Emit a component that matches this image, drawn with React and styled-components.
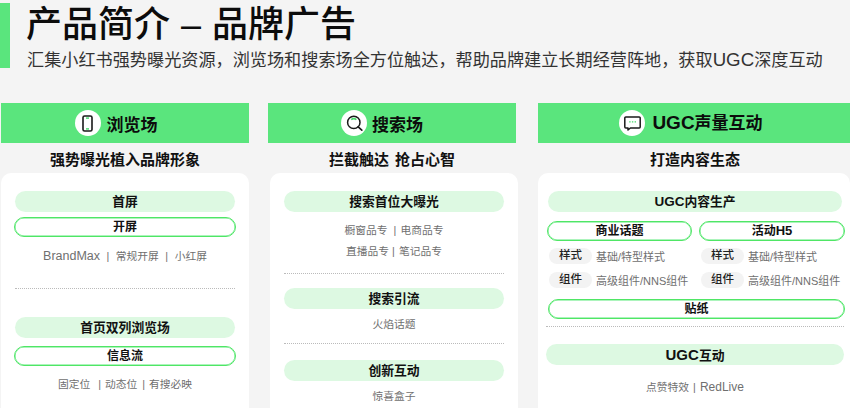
import React from "react";
import styled, { createGlobalStyle } from "styled-components";

const GlobalStyle = createGlobalStyle`
  html, body {
    margin: 0;
    padding: 0;
    width: 850px;
    height: 408px;
    overflow: hidden;
    background: #f4f4f4;
    font-family: "Liberation Sans", "Noto Sans CJK SC", sans-serif;
  }
`;

const Page = styled.div`
  width: 850px;
  height: 408px;
  overflow: hidden;
  padding-top: 3px;
  box-sizing: border-box;
`;

const Hero = styled.header`
  display: flex;
  gap: 16px;
  height: 65px;
`;

const Accent = styled.div`
  width: 10px;
  background: #5ae57d;
`;

const HeroText = styled.div`
  display: flex;
  flex-direction: column;
  margin-top: -2px;
`;

const Title = styled.h1`
  margin: 0;
  height: 48px;
  font-size: 36px;
  line-height: 47px;
  font-weight: 500;
  word-spacing: 1px;
  color: #0c0c0c;
  white-space: nowrap;
`;

const Subtitle = styled.p`
  margin: 0 0 0 1px;
  font-size: 17.15px;
  line-height: 24px;
  color: #333;
  white-space: nowrap;
`;

// latin runs are set larger than the cjk around them in the reference
const Latin = styled.span`
  font-size: ${(p) => p.$size}px;
`;

const Sep = styled.span`
  margin: 0 ${(p) => p.$right ?? 6.5}px 0 ${(p) => p.$left ?? 6.5}px;
`;

const Columns = styled.div`
  display: grid;
  grid-template-columns: 267px 270px 312px;
  margin: 35px 0 0 1px;
`;

const Column = styled.section`
  display: flex;
  flex-direction: column;
  min-width: 0;
`;

const ColumnHead = styled.div`
  display: flex;
  align-items: center;
  justify-content: center;
  gap: ${(p) => p.$gap || 6}px;
  height: 40px;
  box-sizing: border-box;
  padding-right: ${(p) => p.$pad || 0}px;
  padding-bottom: ${(p) => p.$lift || 0}px;
  background: #5ae57d;
  width: ${(p) => p.$width}px;
  font-size: 17px;
  font-weight: 700;
  color: #0c0c0c;
`;

const IconBadge = styled.span`
  display: flex;
  align-items: center;
  justify-content: center;
  width: 26px;
  height: 26px;
  border-radius: 50%;
  background: #fff;
  margin-top: ${(p) => p.$drop || 0}px;
`;

const Tagline = styled.div`
  height: 30px;
  line-height: 33px;
  text-align: center;
  font-size: 15px;
  font-weight: 700;
  word-spacing: ${(p) => p.$spread || 0}px;
  color: #111;
  width: ${(p) => p.$width}px;
`;

const Card = styled.div`
  display: flex;
  flex-direction: column;
  height: 250px;
  background: #fff;
  border-radius: 10px 10px 0 0;
  box-sizing: border-box;
  padding: 18px ${(p) => p.$side || 14}px 0;
  margin-left: ${(p) => p.$shift || 0}px;
  width: ${(p) => p.$width}px;
`;

const Pill = styled.div`
  height: 21px;
  line-height: 21px;
  border-radius: 11px;
  background: #ddf9e2;
  text-align: center;
  font-size: 12.8px;
  font-weight: 700;
  color: #111;
  flex-shrink: 0;
  width: ${(p) => (p.$width ? `${p.$width}px` : "auto")};
  margin-left: ${(p) => p.$shift || 0}px;
`;

const Outline = styled.div`
  height: 20px;
  line-height: 18px;
  box-sizing: border-box;
  border: 1px solid #4fe665;
  box-shadow: inset 0 0 0 0.5px #5ae97a;
  border-radius: 10px;
  background: #fff;
  text-align: center;
  font-size: 12px;
  font-weight: 700;
  color: #111;
  margin: ${(p) => p.$top ?? 5}px -1px 0;
  flex-shrink: 0;
`;

const WideOutline = styled(Outline)`
  width: 297px;
  margin-left: 0;
`;

const SplitOutline = styled(Outline)`
  margin: 0;
`;

const Items = styled.div`
  margin-top: ${(p) => p.$top || 0}px;
  text-align: center;
  font-size: 10.75px;
  line-height: 21px;
  color: #6f6f6f;
  white-space: pre;
  flex-shrink: 0;
  width: ${(p) => (p.$width ? `${p.$width}px` : "auto")};
  margin-left: ${(p) => p.$shift || 0}px;
`;

const Dashed = styled.div`
  border-top: 1px dotted #bbb;
  margin-top: ${(p) => p.$top}px;
  margin-bottom: ${(p) => p.$bottom}px;
  flex-shrink: 0;
  width: ${(p) => (p.$width ? `${p.$width}px` : "auto")};
  margin-left: ${(p) => p.$shift || 0}px;
`;

const Split = styled.div`
  display: grid;
  grid-template-columns: 145px 146px;
  column-gap: 7px;
  margin: 9px -3px 0 -1px;
`;

const SplitCol = styled.div`
  display: flex;
  flex-direction: column;
`;

const SpecRow = styled.div`
  display: flex;
  align-items: center;
  gap: 4px;
  height: 16px;
  margin-top: ${(p) => p.$top}px;
  padding-left: 2px;
  white-space: nowrap;
`;

const SpecTag = styled.span`
  width: 43px;
  height: 16px;
  line-height: 15px;
  border-radius: 8px;
  background: #f3f3f3;
  text-align: center;
  font-size: 11.5px;
  font-weight: 500;
  color: #222;
  flex-shrink: 0;
`;

const SpecText = styled.span`
  font-size: 11px;
  color: #6f6f6f;
`;

const PhoneIcon = () => (
  <svg width="11" height="17" viewBox="0 0 11 17" fill="none">
    <rect x="1" y="1" width="9" height="15" rx="1.6" stroke="#1a1a1a" strokeWidth="1.6" />
    <rect x="4" y="2.4" width="3" height="1.4" fill="#46d96b" />
    <rect x="4" y="13.2" width="3" height="1.4" fill="#46d96b" />
  </svg>
);

const SearchIcon = () => (
  <svg width="17" height="16" viewBox="0 0 17 16" fill="none">
    <circle cx="7.8" cy="7.4" r="6.2" stroke="#1a1a1a" strokeWidth="1.5" />
    <path d="M12.2 11.8l3.6 3.4" stroke="#1a1a1a" strokeWidth="1.6" strokeLinecap="round" />
    <path d="M5.2 4.6c1.4-1 3.8-1 5.2 0" stroke="#46d96b" strokeWidth="1.7" />
  </svg>
);

const ChatIcon = () => (
  <svg width="17" height="15" viewBox="0 0 17 15" fill="none">
    <path d="M1.8 1h13.4a1 1 0 0 1 1 1v9a1 1 0 0 1-1 1H6.4L4 14v-2H1.8a1 1 0 0 1-1-1V2a1 1 0 0 1 1-1z" stroke="#1a1a1a" strokeWidth="1.5" strokeLinejoin="round" />
    <path d="M5.2 5.8h1.4M7.9 5.8h1.4M10.6 5.8H12" stroke="#46d96b" strokeWidth="1.2" />
  </svg>
);

function Spec({ label, text, top }) {
  return (
    <SpecRow $top={top}>
      <SpecTag>{label}</SpecTag>
      <SpecText>{text}</SpecText>
    </SpecRow>
  );
}

export default function App() {
  return (
    <Page>
      <GlobalStyle />
      <Hero>
        <Accent />
        <HeroText>
          <Title>产品简介 – 品牌广告</Title>
          <Subtitle>
            汇集小红书强势曝光资源，浏览场和搜索场全方位触达，帮助品牌建立长期经营阵地，获取<Latin $size={18.7}>UGC</Latin>深度互动
          </Subtitle>
        </HeroText>
      </Hero>

      <Columns>
        <Column>
          <ColumnHead $width={248} $pad={18}>
            <IconBadge><PhoneIcon /></IconBadge>
            浏览场
          </ColumnHead>
          <Tagline $width={248}>强势曝光植入品牌形象</Tagline>
          <Card $width={248}>
            <Pill>首屏</Pill>
            <Outline>开屏</Outline>
            <Items $top={9}>
              <Latin $size={12.5}>BrandMax</Latin><Sep>|</Sep>常规开屏<Sep>|</Sep>小红屏
            </Items>
            <Dashed $top={21} $bottom={28} />
            <Pill>首页双列浏览场</Pill>
            <Outline $top={8}>信息流</Outline>
            <Items $top={8}>
              固定位<Sep $left={8} $right={4}>|</Sep>动态位<Sep $left={5} $right={4}>|</Sep>有搜必映
            </Items>
          </Card>
        </Column>

        <Column>
          <ColumnHead $width={248} $pad={20} $gap={5}>
            <IconBadge><SearchIcon /></IconBadge>
            搜索场
          </ColumnHead>
          <Tagline $width={248} $spread={2}>{"拦截触达  抢占心智"}</Tagline>
          <Card $width={248} $shift={2}>
            <Pill>搜索首位大曝光</Pill>
            <Items $top={8}>
              橱窗品专<Sep $left={6} $right={4}>|</Sep>电商品专{"\n"}直播品专<Sep $left={3} $right={4}>|</Sep>笔记品专
            </Items>
            <Dashed $top={11} $bottom={14} />
            <Pill>搜索引流</Pill>
            <Items $top={5}>火焰话题</Items>
            <Dashed $top={8} $bottom={16} />
            <Pill>创新互动</Pill>
            <Items $top={5}>惊喜盒子</Items>
          </Card>
        </Column>

        <Column>
          <ColumnHead $width={312} $pad={6} $gap={7} $lift={3}>
            <IconBadge $drop={3}><ChatIcon /></IconBadge>
            <span><Latin $size={19}>UGC</Latin>声量互动</span>
          </ColumnHead>
          <Tagline $width={314}>打造内容生态</Tagline>
          <Card $width={312} $side={10}>
            <Pill $width={294}><Latin $size={13.5}>UGC</Latin>内容生产</Pill>
            <Split>
              <SplitCol>
                <SplitOutline>商业话题</SplitOutline>
                <Spec label="样式" text="基础/特型样式" top={7} />
                <Spec label="组件" text="高级组件/NNS组件" top={8} />
              </SplitCol>
              <SplitCol>
                <SplitOutline>活动<Latin $size={13}>H5</Latin></SplitOutline>
                <Spec label="样式" text="基础/特型样式" top={7} />
                <Spec label="组件" text="高级组件/NNS组件" top={8} />
              </SplitCol>
            </Split>
            <WideOutline $top={11}>贴纸</WideOutline>
            <Dashed $top={7} $bottom={17} $width={298} $shift={-2} />
            <Pill $width={298} $shift={-2}><Latin $size={15}>UGC</Latin>互动</Pill>
            <Items $top={12} $width={298} $shift={-2}>
              点赞特效<Sep $left={4} $right={4}>|</Sep><Latin $size={12}>RedLive</Latin>
            </Items>
          </Card>
        </Column>
      </Columns>
    </Page>
  );
}
